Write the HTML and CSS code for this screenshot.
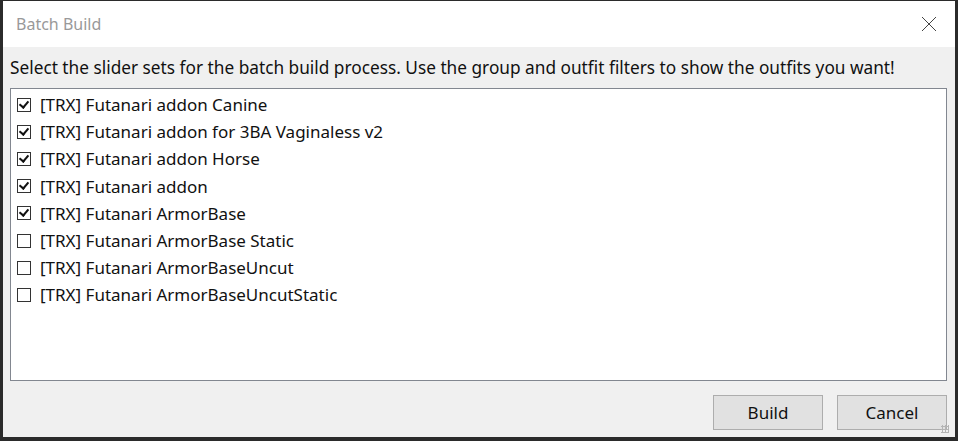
FILE: index.html
```html
<!DOCTYPE html>
<html>
<head>
  <title>Batch Build</title>
  <link rel="stylesheet" href="styles.css">
</head>
<body>
  <div class="dialog">
    <div class="titlebar">
      <span class="title">Batch Build</span>
      <svg class="close" width="16" height="16" viewBox="0 0 16 16">
        <path d="M1 1 L15 15 M15 1 L1 15" stroke="#444" stroke-width="1" fill="none"/>
      </svg>
    </div>
    <div class="content">
      <p class="hint">Select the slider sets for the batch build process. Use the group and outfit filters to show the outfits you want!</p>
      <div class="list">
        <label class="item"><span class="box checked"></span>[TRX] Futanari addon Canine</label>
        <label class="item"><span class="box checked"></span>[TRX] Futanari addon for 3BA Vaginaless v2</label>
        <label class="item"><span class="box checked"></span>[TRX] Futanari addon Horse</label>
        <label class="item"><span class="box checked"></span>[TRX] Futanari addon</label>
        <label class="item"><span class="box checked"></span>[TRX] Futanari ArmorBase</label>
        <label class="item"><span class="box"></span>[TRX] Futanari ArmorBase Static</label>
        <label class="item"><span class="box"></span>[TRX] Futanari ArmorBaseUncut</label>
        <label class="item"><span class="box"></span>[TRX] Futanari ArmorBaseUncutStatic</label>
      </div>
      <div class="buttons">
        <button>Build</button>
        <button>Cancel</button>
      </div>
      <div class="grip"></div>
    </div>
  </div>
</body>
</html>
```

FILE: styles.css
```css
body {
  margin: 0;
  padding: 1px 3px 4px 3px;
  background-color: #2b2b2b;
  font-family: "Noto Sans", "Open Sans", sans-serif;
}

.dialog {
  width: 952px;
  height: 436px;
  background-color: #f0f0f0;
  display: flex;
  flex-direction: column;
}

.titlebar {
  height: 46px;
  background-color: #fff;
  display: flex;
  align-items: center;
  justify-content: space-between;
  padding: 0 18px 0 13px;
}

.titlebar .title {
  font-size: 16px;
  color: #999;
}

.close {
  display: block;
}

.content {
  position: relative;
  flex: 1;
  padding: 0 8px 0 7px;
}

.hint {
  margin: 10px 0 9px 0;
  font-size: 17.25px;
  color: #111;
  line-height: 22px;
}

.list {
  height: 289px;
  background-color: #fff;
  border: 1px solid #828790;
  padding: 2px 0 0 6px;
}

.item {
  display: flex;
  align-items: center;
  height: 27.2px;
  font-size: 17px;
  color: #111;
}

.box {
  width: 12px;
  height: 12px;
  border: 1px solid #333;
  background: #fff;
  margin-right: 9px;
  position: relative;
  flex: none;
}

.box.checked::after {
  content: "";
  position: absolute;
  left: 3px;
  top: 0px;
  width: 4px;
  height: 7px;
  border-right: 2px solid #111;
  border-bottom: 2px solid #111;
  transform: rotate(40deg);
}

.buttons {
  display: flex;
  justify-content: flex-end;
  gap: 14px;
  margin-top: 14px;
}

.buttons button {
  width: 110px;
  height: 35px;
  background-color: #e1e1e1;
  border: 1px solid #adadad;
  font-family: inherit;
  font-size: 17px;
  color: #111;
}

.grip {
  position: absolute;
  right: 6px;
  bottom: 4px;
  width: 8px;
  height: 8px;
  background-image: radial-gradient(#b4b4b4 1px, transparent 1.2px);
  background-size: 3px 3px;
}
```
